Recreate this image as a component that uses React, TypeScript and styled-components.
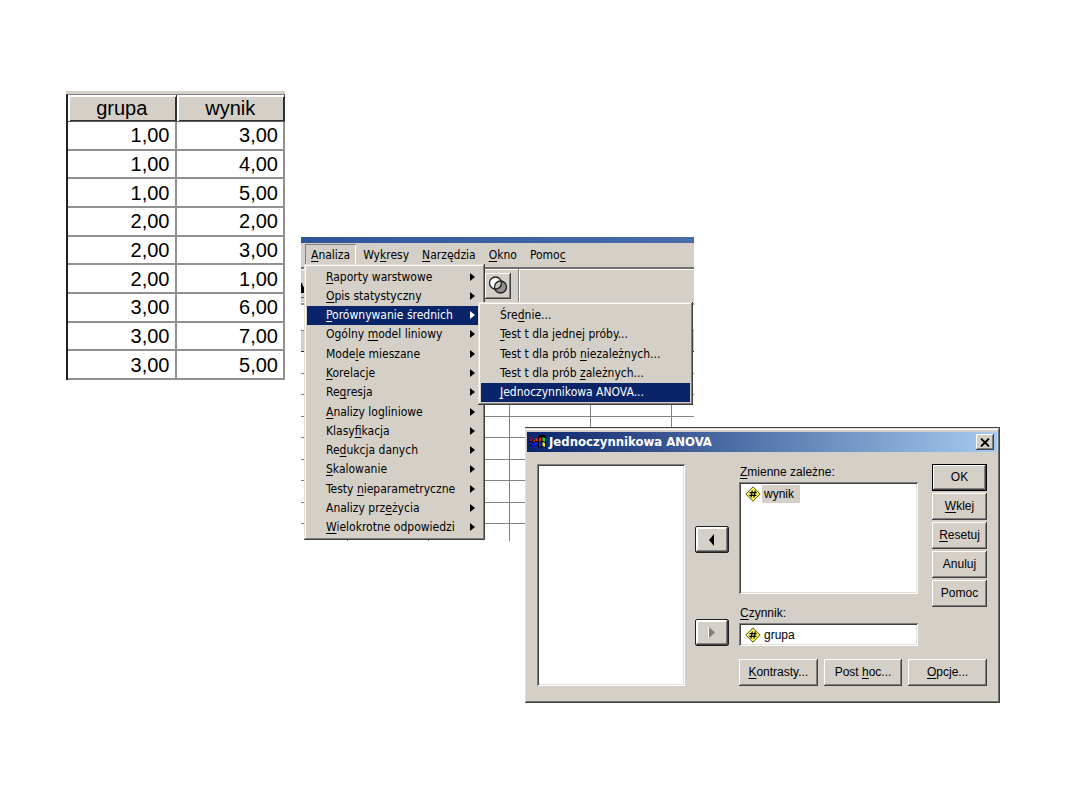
import React from "react";
import styled, { createGlobalStyle, css } from "styled-components";

const face = "#d4d0c8";
const navy = "#0a246a";
const menuFont = `"DejaVu Sans Condensed", "DejaVu Sans", Tahoma, sans-serif`;
const dialogFont = `"Liberation Sans", Arial, sans-serif`;

const GlobalStyle = createGlobalStyle`
  * { box-sizing: border-box; }
  body { margin: 0; background: #fff; color: #000; }
  button, input { font: inherit; color: inherit; }
  u { text-underline-offset: 2px; text-decoration-thickness: 1px; text-decoration-skip-ink: none; }
`;

const raised = css`
  box-shadow: inset -1px -1px #404040, inset 1px 1px #fff, inset -2px -2px #808080;
`;
const popupEdge = css`
  box-shadow: inset -1px -1px #404040, inset 1px 1px #e4e0d8, inset -2px -2px #808080, inset 2px 2px #fff;
`;
const sunken = css`
  box-shadow: inset 1px 1px #808080, inset -1px -1px #fff, inset 2px 2px #404040, inset -2px -2px #e4e0d8;
`;

const Canvas = styled.main`
  position: relative;
  min-height: 100vh;
`;

/* Data view */

const DataFigure = styled.section`
  position: absolute;
  left: 66px;
  top: 91px;
  width: 219px;
  border-top: 3px solid ${face};
`;

const DataTable = styled.table`
  width: 100%;
  height: 286px;
  border-collapse: separate;
  border-spacing: 0;
  table-layout: fixed;
  border-top: 1px solid #808080;
  border-left: 2px solid #202020;
  font: 20px/24px ${dialogFont};
`;

const DataHead = styled.th`
  height: 27px;
  padding: 0;
  font-weight: 400;
  background: ${face};
  border-right: 1px solid #303030;
  border-bottom: 1px solid #606060;
  box-shadow: inset 2px 2px #fff, inset -1px -1px #303030;
`;

const DataCell = styled.td`
  padding: 0 5px 0 0;
  text-align: right;
  border-right: 2px solid #909090;
  border-bottom: 2px solid #909090;
`;

/* Application window */

const AppWindow = styled.section`
  position: absolute;
  left: 301px;
  top: 237px;
  width: 393px;
  font: 12px/16px ${menuFont};
`;

const AppTitleStrip = styled.div`
  height: 6px;
  background: linear-gradient(to right, #2f549c, #4a6cab);
`;

const MenuBar = styled.nav`
  display: flex;
  gap: 1px;
  height: 24px;
  padding: 1px 0 1px 4px;
  background: ${face};
`;

const MenuBarButton = styled.button<{ $open?: boolean }>`
  padding: 0 6px 1px;
  border: 0;
  background: none;
  white-space: nowrap;
  ${(p) => p.$open && "box-shadow: inset 1px 1px #808080, inset -1px -1px #fff;"}
`;

const Toolbar = styled.div`
  display: flex;
  align-items: flex-start;
  justify-content: space-between;
  height: 35px;
  background: ${face};
  border-top: 2px solid #707070;
  box-shadow: inset 0 1px #fff;
`;

const ToolFragment = styled.div`
  width: 4px;
  height: 29px;
  padding-top: 12px;
  border-bottom: 1px solid #606060;
  svg { display: block; }
`;

const ToolGroup = styled.div`
  display: flex;
  width: 209px;
  height: 33px;
  padding-top: 4px;
`;

const ToolButton = styled.button`
  display: grid;
  place-items: center;
  width: 26px;
  height: 26px;
  padding: 0 1px 2px 0;
  border: 0;
  background: ${face};
  ${raised}
`;

const ToolDivider = styled.span`
  width: 2px;
  height: 33px;
  margin: -4px 0 0 7px;
  border-left: 1px solid #808080;
  border-right: 1px solid #fff;
`;

const CellEditor = styled.div`
  height: 28px;
  background: #fff;
  border-top: 1px solid #fff;
  box-shadow: inset 0 2px #909090;
`;

const ColumnHeads = styled.div`
  height: 22px;
  background: ${face};
  border-top: 1px solid #808080;
  border-bottom: 1px solid #303030;
`;

const SheetClip = styled.div`
  height: 189px;
  overflow: hidden;
`;

const Sheet = styled.table`
  width: 100%;
  height: 194px;
  table-layout: fixed;
  border-collapse: separate;
  border-spacing: 0;
  td { padding: 0; border-right: 1px solid #808080; border-bottom: 1px solid #808080; }
  td:last-child { border-right: 0; }
`;

const Popup = styled.div<{ $sub?: boolean }>`
  position: absolute;
  left: ${(p) => (p.$sub ? 177 : 3)}px;
  top: ${(p) => (p.$sub ? 65 : 27)}px;
  width: ${(p) => (p.$sub ? 215 : 181)}px;
  height: ${(p) => (p.$sub ? 103 : 276)}px;
  padding: 3px;
  display: flex;
  flex-direction: column;
  background: ${face};
  ${popupEdge}
`;

const Item = styled.button<{ $active?: boolean }>`
  flex: 1;
  min-height: 0;
  display: flex;
  align-items: center;
  justify-content: space-between;
  padding: 0 7px 0 19px;
  border: 0;
  text-align: left;
  white-space: nowrap;
  background: ${(p) => (p.$active ? navy : "transparent")};
  color: ${(p) => (p.$active ? "#fff" : "#000")};
`;

/* Dialog */

const Dialog = styled.section`
  position: absolute;
  left: 525px;
  top: 427px;
  width: 475px;
  padding: 4px 3px 3px 2px;
  background: ${face};
  border-top: 1px solid #404040;
  box-shadow: inset -1px -1px #404040, inset 1px 1px #e4e0d8, inset -2px -2px #707070, inset 0 2px #fff;
  font: 12px/16px ${dialogFont};
`;

const TitleBar = styled.header`
  display: flex;
  align-items: center;
  height: 20px;
  padding: 0 3px 0 2px;
  background: linear-gradient(to right, ${navy}, #a6caf0);
`;

const Title = styled.h1`
  flex: 1;
  margin: 0 0 0 3px;
  color: #fff;
  font: bold 13px/16px ${menuFont};
`;

const CloseButton = styled.button`
  display: grid;
  place-items: center;
  width: 18px;
  height: 16px;
  padding: 0;
  border: 0;
  background: ${face};
  ${raised}
`;

const DialogBody = styled.div`
  display: flex;
  gap: 10px;
  padding: 12px 10px 14px;
`;

const SourceList = styled.ul`
  width: 148px;
  margin: 0;
  padding: 2px;
  background: #fff;
  ${sunken}
`;

const Movers = styled.div`
  display: flex;
  flex-direction: column;
  gap: 66px;
  padding-top: 62px;
`;

const MoveButton = styled.button`
  display: grid;
  place-items: center;
  width: 34px;
  height: 27px;
  padding: 0;
  border: 1px solid #202020;
  border-radius: 2px;
  background: ${face};
  box-shadow: inset -1px -1px #404040, inset 1px 1px #fff, inset -2px -2px #808080, inset 2px 2px #fff;
`;

const Settings = styled.div`
  flex: 1;
  display: flex;
  flex-direction: column;
  gap: 13px;
`;

const SettingsTop = styled.div`
  display: flex;
  justify-content: space-between;
`;

const Fields = styled.div`
  width: 179px;
`;

const FieldLabel = styled.label`
  display: block;
  height: 18px;
  padding-left: 1px;
`;

const VariableList = styled.ul`
  height: 112px;
  margin: 0 0 11px;
  padding: 3px 6px;
  list-style: none;
  background: #fff;
  ${sunken}
`;

const Variable = styled.li`
  display: flex;
  align-items: center;
  gap: 1px;
  height: 18px;
`;

const VariableName = styled.span`
  padding: 1px 6px 1px 2px;
  background: ${face};
`;

const FactorBox = styled.div`
  display: flex;
  align-items: center;
  height: 23px;
  padding: 2px 6px;
  background: #fff;
  ${sunken}
`;

const FactorInput = styled.input`
  flex: 1;
  min-width: 0;
  padding: 0 0 0 3px;
  border: 0;
  outline: 0;
  background: transparent;
`;

const Actions = styled.div`
  display: flex;
  flex-direction: column;
  gap: 2px;
  width: 55px;
`;

const Options = styled.div`
  display: grid;
  grid-template-columns: repeat(3, 1fr);
  gap: 6px;
`;

const PushButton = styled.button<{ $default?: boolean }>`
  height: 27px;
  padding: 0 0 2px;
  border: ${(p) => (p.$default ? "1px solid #000" : "0")};
  background: ${face};
  white-space: nowrap;
  ${raised}
`;

/* Marks the access key: the letter after "&" is underlined */
const Key = ({ text }: { text: string }) => {
  const [before, after] = text.split("&");
  if (after === undefined) return <span>{text}</span>;
  return (
    <span>
      {before}
      <u>{after[0]}</u>
      {after.slice(1)}
    </span>
  );
};

const SubArrow = () => (
  <svg width="5" height="8" viewBox="0 0 5 8" aria-hidden="true">
    <path d="M0 0v8l5-4z" fill="currentColor" />
  </svg>
);

const NumericIcon = () => (
  <svg width="16" height="16" viewBox="0 0 16 16" aria-hidden="true">
    <path d="M8 .8 15.200 8 8 15.200.8 8z" fill="#f7f34a" stroke="#55551c" />
    <path d="M7.300 4.500 6 11.500M10.200 4.500 9 11.500M4.600 6.700h7M4.300 9.300h7" stroke="#000" strokeWidth="1.200" />
  </svg>
);

const SpssIcon = () => (
  <svg width="17" height="14" viewBox="0 0 17 14" aria-hidden="true">
    <path d="M0 2h2v1H0zM3 3h2v1H3zM1 4h2v2H1zM4 5h2v2H4zM6 3h2v2H6z" fill="#b01830" />
    <path d="M7 4h2v2H7z" fill="#f02020" />
    <path d="M1 7h2v2H1zM3 9h2v1H3zM5 8h3v3H5zM3 11h3v1H3z" fill="#1616d8" />
    <path d="M0 3h1v1H0zM3 5h1v1H3zM0 6h2v1H0zM3 7h2v1H3zM1 10h2v1H1zM6 6h2v1H6z" fill="#000" />
    <path d="M9 2 11 0h4l2 1v12l-2-1h-3l-3 1z" fill="#000" />
    <path d="M10 3 12.500 2v4L10 7z" fill="#f01818" />
    <path d="M13.500 2 16 3v4l-2.500-1z" fill="#18d030" />
    <path d="M10 8 12.500 7v4L10 12z" fill="#2030f0" />
    <path d="M13.500 7 16 8v4l-2.500-1z" fill="#f4e820" />
  </svg>
);

const SetsIcon = () => (
  <svg width="20" height="20" viewBox="0 0 20 20" aria-hidden="true">
    <circle cx="7.500" cy="8" r="6" fill="#fff" />
    <circle cx="12.500" cy="12" r="6" fill="#909090" />
    <path d="M13.300 6.100A6 6 0 0 1 6.700 13.900 6 6 0 0 1 13.300 6.100z" fill="#c8c8c4" />
    <circle cx="7.500" cy="8" r="6" fill="none" stroke="#202020" strokeWidth="1.300" />
    <circle cx="12.500" cy="12" r="6" fill="none" stroke="#202020" strokeWidth="1.300" />
  </svg>
);

const rows = [
  ["1,00", "3,00"],
  ["1,00", "4,00"],
  ["1,00", "5,00"],
  ["2,00", "2,00"],
  ["2,00", "3,00"],
  ["2,00", "1,00"],
  ["3,00", "6,00"],
  ["3,00", "7,00"],
  ["3,00", "5,00"],
];

const menus = ["&Analiza", "Wy&kresy", "&Narzędzia", "&Okno", "Pomo&c"];

const analyses = [
  "&Raporty warstwowe",
  "&Opis statystyczny",
  "&Porównywanie średnich",
  "Ogólny &model liniowy",
  "Mode&le mieszane",
  "&Korelacje",
  "Re&gresja",
  "&Analizy logliniowe",
  "Klasy&fikacja",
  "Re&dukcja danych",
  "&Skalowanie",
  "Testy &nieparametryczne",
  "Analizy prz&eżycia",
  "&Wielokrotne odpowiedzi",
];

const comparisons = [
  "Śre&dnie...",
  "&Test t dla jednej próby...",
  "Test t dla prób &niezależnych...",
  "Test t dla prób &zależnych...",
  "&Jednoczynnikowa ANOVA...",
];

export default function App() {
  return (
    <Canvas>
      <GlobalStyle />

      <DataFigure>
        <DataTable>
          <thead>
            <tr>
              <DataHead scope="col">grupa</DataHead>
              <DataHead scope="col">wynik</DataHead>
            </tr>
          </thead>
          <tbody>
            {rows.map((r, i) => (
              <tr key={i}>
                <DataCell>{r[0]}</DataCell>
                <DataCell>{r[1]}</DataCell>
              </tr>
            ))}
          </tbody>
        </DataTable>
      </DataFigure>

      <AppWindow>
        <AppTitleStrip />
        <MenuBar>
          {menus.map((m, i) => (
            <MenuBarButton key={m} $open={i === 0}>
              <Key text={m} />
            </MenuBarButton>
          ))}
        </MenuBar>
        <Toolbar>
          <ToolFragment>
            <svg width="4" height="12" viewBox="0 0 4 12" aria-hidden="true">
              <path d="M0 2h1l1 3 2 3v4H0z" fill="#000" />
            </svg>
          </ToolFragment>
          <ToolGroup>
            <ToolButton aria-label="Zestawy">
              <SetsIcon />
            </ToolButton>
            <ToolDivider />
          </ToolGroup>
        </Toolbar>
        <CellEditor />
        <ColumnHeads />
        <SheetClip>
          <Sheet aria-hidden="true">
            <colgroup>
              <col width="47" />
              <col width="81" />
              <col width="81" />
              <col width="81" />
              <col width="81" />
              <col />
            </colgroup>
            <tbody>
              {Array.from({ length: 9 }, (_, r) => (
                <tr key={r}>
                  {Array.from({ length: 6 }, (_, c) => (
                    <td key={c} />
                  ))}
                </tr>
              ))}
            </tbody>
          </Sheet>
        </SheetClip>

        <Popup role="menu">
          {analyses.map((a, i) => (
            <Item key={a} role="menuitem" $active={i === 2}>
              <Key text={a} />
              <SubArrow />
            </Item>
          ))}
        </Popup>
        <Popup role="menu" $sub>
          {comparisons.map((c, i) => (
            <Item key={c} role="menuitem" $active={i === 4}>
              <Key text={c} />
            </Item>
          ))}
        </Popup>
      </AppWindow>

      <Dialog role="dialog" aria-labelledby="dialog-title">
        <TitleBar>
          <SpssIcon />
          <Title id="dialog-title">Jednoczynnikowa ANOVA</Title>
          <CloseButton aria-label="Zamknij">
            <svg width="10" height="9" viewBox="0 0 10 9" aria-hidden="true">
              <path d="M1 .5 9 8.500M9 .5 1 8.500" stroke="#000" strokeWidth="1.800" />
            </svg>
          </CloseButton>
        </TitleBar>
        <DialogBody>
          <SourceList role="listbox" aria-label="Zmienne" />
          <Movers>
            <MoveButton aria-label="Usuń zmienną">
              <svg width="6" height="12" viewBox="0 0 6 12" aria-hidden="true">
                <path d="M5 0v12L0 6z" fill="#000" />
              </svg>
            </MoveButton>
            <MoveButton aria-label="Dodaj czynnik" disabled>
              <svg width="8" height="12" viewBox="0 0 8 12" aria-hidden="true">
                <path d="M0 0h1v11H0z" fill="#fff" />
                <path d="M1 0v11l6-5.500z" fill="#808080" />
              </svg>
            </MoveButton>
          </Movers>
          <Settings>
            <SettingsTop>
              <Fields>
                <FieldLabel as="div" id="dependent-label">
                  <Key text="&Zmienne zależne:" />
                </FieldLabel>
                <VariableList role="listbox" aria-labelledby="dependent-label">
                  <Variable role="option" aria-selected="true">
                    <NumericIcon />
                    <VariableName>wynik</VariableName>
                  </Variable>
                </VariableList>
                <FieldLabel htmlFor="factor">
                  <Key text="&Czynnik:" />
                </FieldLabel>
                <FactorBox>
                  <NumericIcon />
                  <FactorInput id="factor" defaultValue="grupa" />
                </FactorBox>
              </Fields>
              <Actions>
                <PushButton $default>OK</PushButton>
                <PushButton><Key text="&Wklej" /></PushButton>
                <PushButton><Key text="&Resetuj" /></PushButton>
                <PushButton>Anuluj</PushButton>
                <PushButton>Pomoc</PushButton>
              </Actions>
            </SettingsTop>
            <Options>
              <PushButton><Key text="&Kontrasty..." /></PushButton>
              <PushButton><Key text="Post &hoc..." /></PushButton>
              <PushButton><Key text="&Opcje..." /></PushButton>
            </Options>
          </Settings>
        </DialogBody>
      </Dialog>
    </Canvas>
  );
}
